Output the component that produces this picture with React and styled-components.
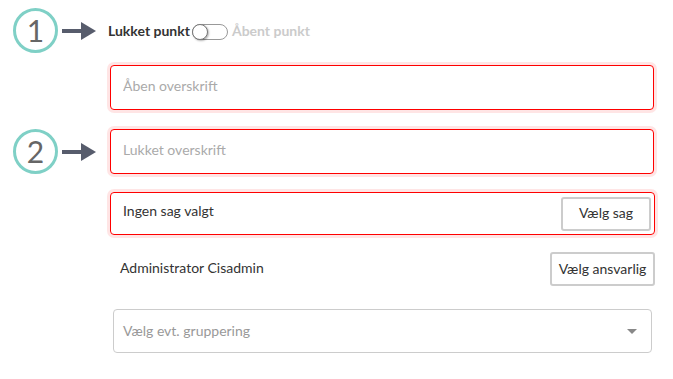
import React from 'react'
import styled, { createGlobalStyle } from 'styled-components'

const Global = createGlobalStyle`
  body {
    margin: 0;
    background: #fff;
    font-family: Lato, 'Open Sans', sans-serif;
    color: #333;
  }
`

const Page = styled.div`
  display: flex;
  flex-direction: column;
  padding-top: 8px;
  width: 673px;
`

const Row = styled.div`
  display: flex;
  align-items: center;
  margin-top: ${p => p.$gap || 0}px;
`

const Slot = styled.div`
  width: 108px;
  flex: none;
  display: flex;
  align-items: center;
  padding-left: 13px;
  box-sizing: border-box;
`

const Circle = styled.div`
  width: 45px;
  height: 45px;
  box-sizing: border-box;
  border: 3.5px solid #7fd0c6;
  border-radius: 50%;
  display: flex;
  align-items: center;
  justify-content: center;
  padding-bottom: 2px;
  font-size: 30px;
  color: #666;
  font-family: Lato, sans-serif;
`

const Arrow = styled.svg`
  margin-left: 4px;
  flex: none;
`

const ToggleLine = styled.div`
  display: flex;
  align-items: center;
  height: 44px;
  font-size: 14px;
  font-weight: 700;
`

const Label = styled.span`
  color: ${p => (p.$off ? '#cbcbcb' : '#333')};
`

const Track = styled.div`
  position: relative;
  width: 36px;
  height: 16px;
  margin: 3px 4px 0 2px;
  box-sizing: border-box;
  border: 1px solid #999;
  border-radius: 9px;
  background: #fff;
`

const Knob = styled.div`
  position: absolute;
  left: -1px;
  top: -1px;
  width: 16px;
  height: 16px;
  box-sizing: border-box;
  border-radius: 50%;
  background: #fff;
  border: 1px solid #777;
  box-shadow: 1px 1px 2px rgba(0, 0, 0, 0.3);
`

const Field = styled.input`
  width: 544px;
  height: 45px;
  margin-left: 2px;
  box-sizing: border-box;
  border: 1px solid #f00;
  border-radius: 4px;
  box-shadow: 0 0 0 3px rgba(255, 0, 0, 0.1);
  padding: 0 12px 4px;
  font-family: Lato, sans-serif;
  font-size: 14px;
  color: #333;
  outline: none;
  &::placeholder {
    color: #aaa;
  }
`

const CaseBox = styled.div`
  width: 545px;
  height: 43px;
  margin-left: 2px;
  box-sizing: border-box;
  border: 1px solid #f00;
  border-radius: 4px;
  box-shadow: 0 0 0 3px rgba(255, 0, 0, 0.1);
  display: flex;
  align-items: center;
  justify-content: space-between;
  padding: 0 3px 0 12px;
  font-size: 14px;
  color: #333;
`

const CaseText = styled.span`
  margin-bottom: 6px;
`

const Button = styled.button`
  height: 34px;
  width: ${p => p.$w}px;
  box-sizing: border-box;
  border: 2px solid #ccc;
  border-radius: 3px;
  background: #fff;
  font-family: Lato, sans-serif;
  font-size: 14px;
  color: #333;
  padding: 0 0 2px;
`

const Person = styled.div`
  width: 547px;
  display: flex;
  align-items: center;
  justify-content: space-between;
  padding-left: 12px;
  box-sizing: border-box;
  font-size: 14px;
  color: #333;
`

const PersonName = styled.span`
  margin-bottom: 4px;
`

const Select = styled.div`
  width: 539px;
  height: 44px;
  margin-left: 5px;
  box-sizing: border-box;
  border: 1px solid #ccc;
  border-radius: 4px;
  display: flex;
  align-items: center;
  justify-content: space-between;
  padding: 0 14px 2px 9px;
  font-size: 14px;
  color: #999;
`

const Caret = styled.span`
  width: 0;
  height: 0;
  margin-top: 2px;
  border-left: 5px solid transparent;
  border-right: 5px solid transparent;
  border-top: 5px solid #888;
`

function Marker({ n }) {
  return (
    <Slot>
      <Circle>{n}</Circle>
      <Arrow width="34" height="18" viewBox="0 0 34 18">
        <rect x="0" y="7" width="20" height="4" fill="#575c6c" />
        <polygon points="19,0 34,9 19,18" fill="#575c6c" />
      </Arrow>
    </Slot>
  )
}

export default function App() {
  return (
    <Page>
      <Global />
      <Row>
        <Marker n="1" />
        <ToggleLine>
          <Label>Lukket punkt</Label>
          <Track>
            <Knob />
          </Track>
          <Label $off>Åbent punkt</Label>
        </ToggleLine>
      </Row>
      <Row $gap={12}>
        <Slot />
        <Field placeholder="Åben overskrift" />
      </Row>
      <Row $gap={19}>
        <Marker n="2" />
        <Field placeholder="Lukket overskrift" />
      </Row>
      <Row $gap={18}>
        <Slot />
        <CaseBox>
          <CaseText>Ingen sag valgt</CaseText>
          <Button $w={90}>Vælg sag</Button>
        </CaseBox>
      </Row>
      <Row $gap={17}>
        <Slot />
        <Person>
          <PersonName>Administrator Cisadmin</PersonName>
          <Button $w={105}>Vælg ansvarlig</Button>
        </Person>
      </Row>
      <Row $gap={23}>
        <Slot />
        <Select>
          <span>Vælg evt. gruppering</span>
          <Caret />
        </Select>
      </Row>
    </Page>
  )
}
